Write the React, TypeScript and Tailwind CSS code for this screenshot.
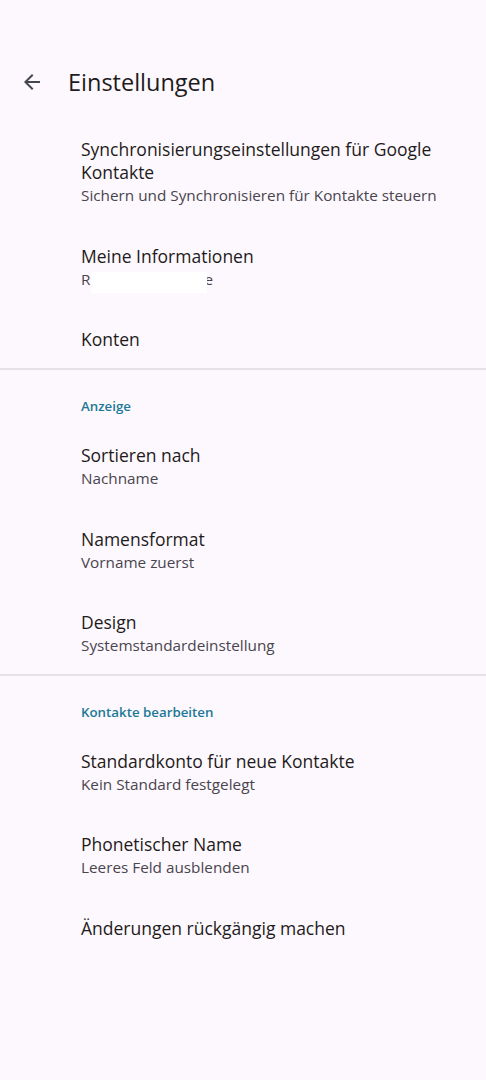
import React from "react";

type Item = { title: string; subtitle?: React.ReactNode };

function Row({ title, subtitle }: Item) {
  return (
    <div className="pl-[81px] pr-[30px] pt-[21px] pb-[16.5px]">
      <div className="text-[17.5px] leading-[23px] text-[#1d1b20]">{title}</div>
      {subtitle !== undefined && (
        <div className="text-[15.3px] leading-[23px] text-[#49454f]">{subtitle}</div>
      )}
    </div>
  );
}

function Section({ label }: { label: string }) {
  return (
    <div className="pl-[81px] pt-[26px] pb-[7px] text-[13.3px] leading-[20px] font-semibold text-[#1c7896]">
      {label}
    </div>
  );
}

function Divider() {
  return <div className="h-[2px] bg-[#e5e1e6]" />;
}

export default function App() {
  return (
    <div
      className="w-[486px] h-[1080px] bg-[#fdf8fd] overflow-hidden"
      style={{ fontFamily: "'Open Sans', 'Noto Sans', sans-serif" }}
    >
      <div className="flex items-center pt-[70px] pb-[23px] h-[117px]">
        <div className="w-[68px] flex items-center justify-center pr-[5px]">
          <svg width="24" height="24" viewBox="0 0 24 24" fill="#44474e">
            <path d="M20 11H7.83l5.59-5.59L12 4l-8 8 8 8 1.41-1.41L7.83 13H20v-2z" />
          </svg>
        </div>
        <div className="text-[23.5px] leading-[24px] text-[#1d1b20]">Einstellungen</div>
      </div>
      <Row
        title="Synchronisierungseinstellungen für Google Kontakte"
        subtitle="Sichern und Synchronisieren für Kontakte steuern"
      />
      <Row
        title="Meine Informationen"
        subtitle={
          <span className="flex items-center">
            <span>R</span>
            <span className="relative z-10 inline-block w-[116px] h-[21px] bg-white translate-y-[3px] ml-[1px]" />
            <span className="-ml-[3px]">e</span>
          </span>
        }
      />
      <div className="pl-[81px] pt-[21px] pb-[17px]">
        <div className="text-[17.5px] leading-[23px] text-[#1d1b20]">Konten</div>
      </div>
      <Divider />
      <Section label="Anzeige" />
      <Row title="Sortieren nach" subtitle="Nachname" />
      <Row title="Namensformat" subtitle="Vorname zuerst" />
      <Row title="Design" subtitle="Systemstandardeinstellung" />
      <Divider />
      <Section label="Kontakte bearbeiten" />
      <Row title="Standardkonto für neue Kontakte" subtitle="Kein Standard festgelegt" />
      <Row title="Phonetischer Name" subtitle="Leeres Feld ausblenden" />
      <Row title="Änderungen rückgängig machen" />
    </div>
  );
}
